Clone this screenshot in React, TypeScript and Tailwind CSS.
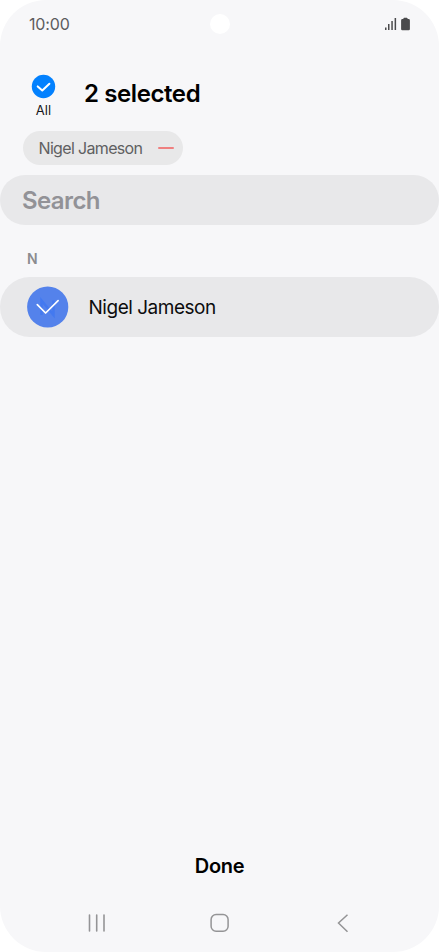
type Contact = {
    readonly id: string;
    readonly name: string;
};

type ContactGroup = {
    readonly letter: string;
    readonly contacts: ReadonlyArray<Contact>;
};

const groups: ReadonlyArray<ContactGroup> = [
    { letter: "N", contacts: [{ id: "1", name: "Nigel Jameson" }] },
];

function StatusBar() {
    return (
        <div className="flex h-12 shrink-0 items-center justify-between px-[28px]">
            <span className="w-[120px] pl-px text-base leading-6 tracking-[-0.15px] text-[#5c5c5e]">10:00</span>
            <span className="h-5 w-5 rounded-full bg-white" />
            <div className="flex w-[120px] justify-end">
                <svg width="27" height="14" viewBox="0 0 27 14" fill="#4a4a4c">
                    <rect x="1" y="10.5" width="1.5" height="2.5" />
                    <rect x="4" y="7" width="1.5" height="6" />
                    <rect x="7.3" y="4" width="1.5" height="9" />
                    <rect x="10.6" y="1" width="1.5" height="12" />
                    <path d="M20.2 .7h2.6a.8.8 0 0 1 .8.8v.6h1a1.3 1.3 0 0 1 1.3 1.3v8.7a1.2 1.2 0 0 1-1.2 1.2h-6.4a1.2 1.2 0 0 1-1.2-1.2V3.4a1.3 1.3 0 0 1 1.3-1.3h1v-.6a.8.8 0 0 1 .8-.8z" />
                </svg>
            </div>
        </div>
    );
}

function SelectionHeader() {
    return (
        <header className="flex h-[83px] shrink-0 pl-[31px]">
            <div className="flex w-[25px] flex-col items-center pt-[26px]">
                <svg width="25" height="25" viewBox="0 0 25 25" fill="none">
                    <circle cx="12.5" cy="12.5" r="11.7" fill="#0381fe" />
                    <path d="M6.7 12.4l4.6 4.1 7.1-6.8" stroke="#fff" strokeWidth="2" strokeLinecap="round" strokeLinejoin="round" />
                </svg>
                <span className="mt-[3px] text-[13px] leading-4 text-[#18181a]">All</span>
            </div>
            <h1 className="ml-7 pt-[30px] text-2xl leading-8 font-semibold tracking-[-0.4px] text-black">2 selected</h1>
        </header>
    );
}

function SelectedChip({ name }: { name: string }) {
    return (
        <div className="ml-[23px] flex h-[34px] w-40 shrink-0 items-center justify-between rounded-full bg-[#e8e8e9] pr-[9px] pl-[15.5px]">
            <span className="text-base tracking-[-0.66px] text-[#5f5f61]">{name}</span>
            <span className="h-[2px] w-4 rounded-full bg-[#ef8080]" />
        </div>
    );
}

function ContactRow({ name }: { name: string }) {
    return (
        <div className="flex h-[60px] items-center rounded-full bg-[#e8e8ea] pl-[27px]">
            <svg width="42" height="42" viewBox="0 0 42 42" fill="none">
                <circle cx="20.7" cy="21" r="20.6" fill="#5482eb" />
                <path d="M14.5 29V14.5l12 14.5V14.5" stroke="#4379f0" strokeWidth="2.5" />
                <path d="M10.3 18.7l8.3 8.3L31.1 14.7" stroke="#fff" strokeWidth="1.7" strokeLinecap="round" strokeLinejoin="round" />
            </svg>
            <span className="ml-[19.5px] pt-[2px] text-[19px] leading-7 tracking-[-0.48px] text-[#0c0c0d]">{name}</span>
        </div>
    );
}

function NavigationBar() {
    return (
        <nav className="flex h-[58px] shrink-0 items-center justify-between px-[86px]">
            <svg width="20" height="20" viewBox="0 0 20 20" fill="none" stroke="#949496" strokeWidth="1.6" strokeLinecap="round">
                <path d="M3.5 2v16M10.7 2v16M18 2v16" />
            </svg>
            <svg width="20" height="20" viewBox="0 0 20 20" fill="none" stroke="#949496" strokeWidth="1.5">
                <rect x="1.1" y="1.5" width="17" height="16.8" rx="5" />
            </svg>
            <svg width="20" height="20" viewBox="0 0 20 20" fill="none" stroke="#949496" strokeWidth="1.5">
                <path d="M14.5 1.7L5.5 10l9 8.7" />
            </svg>
        </nav>
    );
}

export default function App() {
    return (
        <div className="h-[952px] w-[439px] bg-white">
            <main className="flex h-full flex-col overflow-hidden rounded-[46px] bg-[#f7f7f9] font-[Inter,'Liberation_Sans',sans-serif]">
                <StatusBar />
                <SelectionHeader />
                <SelectedChip name="Nigel Jameson" />

                <div className="mt-[10px] flex h-[50px] shrink-0 items-center rounded-full bg-[#e8e8ea] pt-[2px] pl-[22px]">
                    <span className="text-2xl font-semibold tracking-[-0.6px] text-[#929297]">Search</span>
                </div>

                <section className="flex-1">
                    {groups.map((group) => (
                        <div key={group.letter}>
                            <h2 className="h-[52px] pt-6 pl-[27px] text-sm leading-5 font-semibold text-[#8b8b8f]">{group.letter}</h2>
                            {group.contacts.map((contact) => (
                                <ContactRow key={contact.id} name={contact.name} />
                            ))}
                        </div>
                    ))}
                </section>

                <button className="mb-[14px] h-[28px] w-full text-xl leading-7 font-semibold tracking-[-0.3px] text-black">Done</button>
                <NavigationBar />
            </main>
        </div>
    );
}
